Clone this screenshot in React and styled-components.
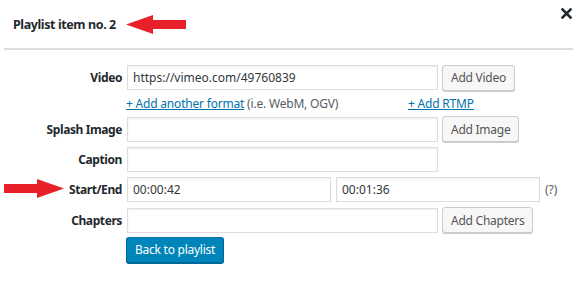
import styled, { createGlobalStyle } from "styled-components";

const GlobalStyle = createGlobalStyle`
  html, body {
    margin: 0;
    padding: 0;
    background: #fff;
  }
  body {
    font-family: "Noto Sans", "Open Sans", sans-serif;
    color: #23282d;
  }
`;

const Modal = styled.div`
  width: 580px;
  height: 281px;
  box-sizing: border-box;
  padding: 0 7px 0 4px;
`;

const Header = styled.div`
  position: relative;
  height: 48px;
  display: flex;
  align-items: center;
  padding-left: 9px;
  border-bottom: 2px solid #dddddd;
`;

const Title = styled.h1`
  margin: 0;
  font-size: 12.5px;
  letter-spacing: -0.4px;
  font-weight: 700;
  color: #23282d;
`;

const Close = styled.button`
  position: absolute;
  right: 0;
  top: 7px;
  border: 0;
  background: none;
  padding: 0;
  width: 14px;
  height: 14px;
  cursor: pointer;
`;

const Form = styled.div`
  display: flex;
  flex-direction: column;
  padding-top: 14px;
`;

const Row = styled.div`
  display: flex;
  align-items: center;
  height: ${({ $h }) => $h || 31}px;
`;

const Label = styled.label`
  width: 118px;
  flex: none;
  text-align: right;
  padding-right: 5px;
  font-size: 12px;
  letter-spacing: -0.4px;
  font-weight: 700;
  color: #23282d;
`;

const Spacer = styled.div`
  width: 122px;
  flex: none;
`;

const Input = styled.input`
  box-sizing: border-box;
  width: ${({ $w }) => $w}px;
  height: 25px;
  margin: 0 0 0 ${({ $ml }) => $ml || 0}px;
  padding: 0 5px;
  border: 1px solid #dddddd;
  box-shadow: inset 0 1px 2px rgba(0, 0, 0, 0.07);
  background: #fff;
  font-family: inherit;
  font-size: 12px;
  color: #32373c;
  outline: none;
`;

const Button = styled.button`
  box-sizing: border-box;
  height: 26px;
  margin-left: 4px;
  padding: 0 8px;
  border: 1px solid #cccccc;
  border-radius: 3px;
  background: #f7f7f7;
  box-shadow: 0 1px 0 #cccccc;
  font-family: inherit;
  font-size: 12px;
  letter-spacing: -0.25px;
  color: #555555;
  white-space: nowrap;
  cursor: pointer;
`;

const PrimaryButton = styled(Button)`
  margin-left: 0;
  background: #0085ba;
  border-color: #0073aa #006799 #006799;
  box-shadow: 0 1px 0 #006799;
  color: #fff;
`;

const Links = styled.div`
  display: flex;
  align-items: center;
  padding-top: 1px;
  font-size: 12px;
  letter-spacing: -0.2px;
  color: #555d66;
  white-space: nowrap;
`;

const LinkGroup = styled.span`
  width: 282px;
  flex: none;
`;

const Link = styled.a`
  color: #0073aa;
  text-decoration: underline;
  cursor: pointer;
`;

const Hint = styled.span`
  margin-left: 5px;
  font-size: 12px;
  color: #555d66;
`;

const Arrow = ({ flip }) => (
  <svg width="60" height="19" viewBox="0 0 60 19">
    <polygon
      points={
        flip
          ? "0,5 33,5 33,0 60,9.5 33,19 33,14 0,14"
          : "0,9.5 27,0 27,5 60,5 60,14 27,14 27,19"
      }
      fill="#e8202a"
    />
  </svg>
);

const TitleArrow = styled.span`
  display: flex;
  margin-left: 10px;
`;

const SideArrow = styled.span`
  position: absolute;
  left: 4px;
  top: 179px;
  display: flex;
`;

export default function App() {
  return (
    <Modal>
      <GlobalStyle />
      <Header>
        <Title>Playlist item no. 2</Title>
        <TitleArrow>
          <Arrow />
        </TitleArrow>
        <Close aria-label="Close">
          <svg width="11" height="11" viewBox="0 0 11 11">
            <path
              d="M1.5 1.5 L9.5 9.5 M9.5 1.5 L1.5 9.5"
              stroke="#23282d"
              strokeWidth="2.6"
              strokeLinecap="square"
            />
          </svg>
        </Close>
      </Header>
      <SideArrow>
        <Arrow flip />
      </SideArrow>
      <Form>
        <Row $h={27}>
          <Label>Video</Label>
          <Input $w={311} defaultValue="https://vimeo.com/49760839" />
          <Button>Add Video</Button>
        </Row>
        <Row $h={23}>
          <Spacer />
          <Links>
            <LinkGroup>
              <Link>+ Add another format</Link> (i.e. WebM, OGV)
            </LinkGroup>
            <Link>+ Add RTMP</Link>
          </Links>
        </Row>
        <Row $h={30}>
          <Label>Splash Image</Label>
          <Input $w={311} />
          <Button>Add Image</Button>
        </Row>
        <Row $h={30}>
          <Label>Caption</Label>
          <Input $w={311} />
        </Row>
        <Row $h={31}>
          <Label>Start/End</Label>
          <Input $w={204} defaultValue="00:00:42" />
          <Input $w={204} $ml={5} defaultValue="00:01:36" />
          <Hint>(?)</Hint>
        </Row>
        <Row $h={30}>
          <Label>Chapters</Label>
          <Input $w={311} />
          <Button>Add Chapters</Button>
        </Row>
        <Row $h={29}>
          <Spacer />
          <PrimaryButton>Back to playlist</PrimaryButton>
        </Row>
      </Form>
    </Modal>
  );
}
